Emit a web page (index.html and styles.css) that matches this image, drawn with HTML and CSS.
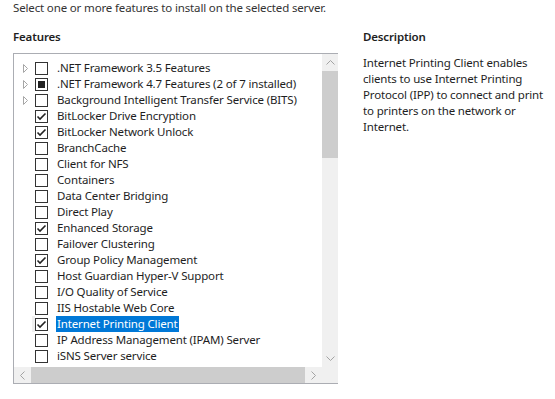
FILE: index.html
```html
<!DOCTYPE html>
<html lang="en">
<head>
    <meta charset="UTF-8">
    <title>Add Roles and Features - Features</title>
    <link rel="stylesheet" href="styles.css">
</head>
<body>
    <p class="intro">Select one or more features to install on the selected server.</p>

    <div class="columns">
        <div class="features">
            <h2 class="section-title">Features</h2>

            <div class="listbox">
                <div class="tree">
                    <div class="row">
                        <span class="expander"><svg width="6" height="9" viewBox="0 0 6 9"><path d="M0.5 0.5 L4.5 4.5 L0.5 8.5 Z" fill="none" stroke="#a6a6a6"/></svg></span>
                        <span class="check"></span>
                        <span class="label">.NET Framework 3.5 Features</span>
                    </div>
                    <div class="row">
                        <span class="expander"><svg width="6" height="9" viewBox="0 0 6 9"><path d="M0.5 0.5 L4.5 4.5 L0.5 8.5 Z" fill="none" stroke="#a6a6a6"/></svg></span>
                        <span class="check partial"></span>
                        <span class="label">.NET Framework 4.7 Features (2 of 7 installed)</span>
                    </div>
                    <div class="row">
                        <span class="expander"><svg width="6" height="9" viewBox="0 0 6 9"><path d="M0.5 0.5 L4.5 4.5 L0.5 8.5 Z" fill="none" stroke="#a6a6a6"/></svg></span>
                        <span class="check"></span>
                        <span class="label">Background Intelligent Transfer Service (BITS)</span>
                    </div>
                    <div class="row">
                        <span class="expander"></span>
                        <span class="check"><svg width="11" height="11" viewBox="0 0 11 11"><path d="M1.5 5.5 L4 8 L9.5 2.5" fill="none" stroke="#222" stroke-width="1.6"/></svg></span>
                        <span class="label">BitLocker Drive Encryption</span>
                    </div>
                    <div class="row">
                        <span class="expander"></span>
                        <span class="check"><svg width="11" height="11" viewBox="0 0 11 11"><path d="M1.5 5.5 L4 8 L9.5 2.5" fill="none" stroke="#222" stroke-width="1.6"/></svg></span>
                        <span class="label">BitLocker Network Unlock</span>
                    </div>
                    <div class="row">
                        <span class="expander"></span>
                        <span class="check"></span>
                        <span class="label">BranchCache</span>
                    </div>
                    <div class="row">
                        <span class="expander"></span>
                        <span class="check"></span>
                        <span class="label">Client for NFS</span>
                    </div>
                    <div class="row">
                        <span class="expander"></span>
                        <span class="check"></span>
                        <span class="label">Containers</span>
                    </div>
                    <div class="row">
                        <span class="expander"></span>
                        <span class="check"></span>
                        <span class="label">Data Center Bridging</span>
                    </div>
                    <div class="row">
                        <span class="expander"></span>
                        <span class="check"></span>
                        <span class="label">Direct Play</span>
                    </div>
                    <div class="row">
                        <span class="expander"></span>
                        <span class="check"><svg width="11" height="11" viewBox="0 0 11 11"><path d="M1.5 5.5 L4 8 L9.5 2.5" fill="none" stroke="#222" stroke-width="1.6"/></svg></span>
                        <span class="label">Enhanced Storage</span>
                    </div>
                    <div class="row">
                        <span class="expander"></span>
                        <span class="check"></span>
                        <span class="label">Failover Clustering</span>
                    </div>
                    <div class="row">
                        <span class="expander"></span>
                        <span class="check"><svg width="11" height="11" viewBox="0 0 11 11"><path d="M1.5 5.5 L4 8 L9.5 2.5" fill="none" stroke="#222" stroke-width="1.6"/></svg></span>
                        <span class="label">Group Policy Management</span>
                    </div>
                    <div class="row">
                        <span class="expander"></span>
                        <span class="check"></span>
                        <span class="label">Host Guardian Hyper-V Support</span>
                    </div>
                    <div class="row">
                        <span class="expander"></span>
                        <span class="check"></span>
                        <span class="label">I/O Quality of Service</span>
                    </div>
                    <div class="row">
                        <span class="expander"></span>
                        <span class="check"></span>
                        <span class="label">IIS Hostable Web Core</span>
                    </div>
                    <div class="row hover">
                        <span class="expander"></span>
                        <span class="check"><svg width="11" height="11" viewBox="0 0 11 11"><path d="M1.5 5.5 L4 8 L9.5 2.5" fill="none" stroke="#222" stroke-width="1.6"/></svg></span>
                        <span class="label selected">Internet Printing Client</span>
                    </div>
                    <div class="row">
                        <span class="expander"></span>
                        <span class="check"></span>
                        <span class="label">IP Address Management (IPAM) Server</span>
                    </div>
                    <div class="row">
                        <span class="expander"></span>
                        <span class="check"></span>
                        <span class="label">iSNS Server service</span>
                    </div>
                </div>

                <div class="vscroll">
                    <span class="sb-button"><svg width="9" height="5" viewBox="0 0 9 5"><path d="M0.5 4.5 L4.5 0.5 L8.5 4.5" fill="none" stroke="#a3a3a3"/></svg></span>
                    <span class="sb-thumb v-thumb"></span>
                    <span class="sb-track"></span>
                    <span class="sb-button"><svg width="9" height="5" viewBox="0 0 9 5"><path d="M0.5 0.5 L4.5 4.5 L8.5 0.5" fill="none" stroke="#a3a3a3"/></svg></span>
                </div>

                <div class="hscroll">
                    <span class="sb-button"><svg width="5" height="9" viewBox="0 0 5 9"><path d="M4.5 0.5 L0.5 4.5 L4.5 8.5" fill="none" stroke="#a3a3a3"/></svg></span>
                    <span class="sb-thumb h-thumb"></span>
                    <span class="sb-track"></span>
                    <span class="sb-button"><svg width="5" height="9" viewBox="0 0 5 9"><path d="M0.5 0.5 L4.5 4.5 L0.5 8.5" fill="none" stroke="#a3a3a3"/></svg></span>
                </div>

                <div class="corner"></div>
            </div>
        </div>

        <div class="description">
            <h2 class="section-title">Description</h2>
            <p class="description-text">Internet Printing Client enables clients to use Internet Printing Protocol (IPP) to connect and print to printers on the network or Internet.</p>
        </div>
    </div>
</body>
</html>
```

FILE: styles.css
```css
* {
    margin: 0;
    padding: 0;
    box-sizing: border-box;
}

body {
    font-family: 'Segoe UI', 'Noto Sans', sans-serif;
    font-size: 11.5px;
    letter-spacing: -0.15px;
    line-height: 16px;
    color: #1e1e1e;
    background: white;
    padding-left: 13px;
}

.intro {
    color: #333;
}

.columns {
    display: grid;
    grid-template-columns: 325px 192px;
    column-gap: 25px;
    margin-top: 13px;
}

.section-title {
    font-size: 11.5px;
    font-weight: 600;
    line-height: 16px;
    color: #1e1e1e;
}

/* list box with tree + scrollbars */
.listbox {
    margin-top: 8px;
    width: 325px;
    height: 331px;
    border: 1px solid #abadb3;
    display: grid;
    grid-template-columns: 1fr 16px;
    grid-template-rows: 1fr 16px;
    background: white;
}

.tree {
    overflow: hidden;
    padding-top: 6px;
}

.row {
    display: flex;
    align-items: center;
    height: 16px;
    white-space: nowrap;
}

.expander {
    width: 21px;
    height: 16px;
    display: flex;
    align-items: center;
    padding-left: 9px;
}

.check {
    width: 13px;
    height: 13px;
    border: 1px solid #333;
    background: white;
    display: flex;
    align-items: center;
    justify-content: center;
    flex-shrink: 0;
}

.check.partial::after {
    content: '';
    width: 7px;
    height: 7px;
    background: #222;
}

.row.hover .expander {
    background: linear-gradient(to right, transparent 18px, #f0f0f0 18px);
}

.label {
    margin-left: 8px;
    padding: 0 1px;
    line-height: 16px;
}

.label.selected {
    background: #0078d7;
    color: white;
}

.vscroll,
.hscroll {
    display: flex;
    background: #f0f0f0;
}

.vscroll {
    flex-direction: column;
}

.sb-button {
    flex: 0 0 17px;
    display: flex;
    align-items: center;
    justify-content: center;
}

.sb-track {
    flex: 1;
}

.sb-thumb {
    background: #cdcdcd;
}

.v-thumb {
    flex: 0 0 87px;
}

.h-thumb {
    flex: 0 0 274px;
}

.corner {
    background: #f0f0f0;
}

.description-text {
    margin-top: 10px;
    color: #1e1e1e;
}
```
